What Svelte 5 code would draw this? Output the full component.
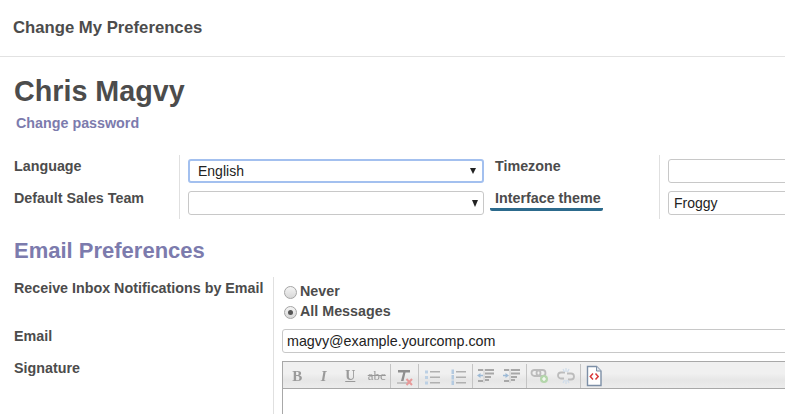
<script>
  const lines = [0, 1, 2];
</script>

<div class="page">
  <header class="bar"><h2>Change My Preferences</h2></header>
  <main class="sheet">
    <h1>Chris Magvy</h1>
    <a class="pw" href="#pw">Change password</a>

    <section class="prefs">
      <div class="label">Language</div>
      <div class="cell rule"><div class="field focus">English<span class="arrow small"></span></div></div>
      <div class="label">Timezone</div>
      <div class="cell rule last"><div class="field"></div></div>

      <div class="label">Default Sales Team</div>
      <div class="cell rule"><div class="field"><span class="arrow"></span></div></div>
      <div class="label"><span class="tip">Interface theme</span></div>
      <div class="cell rule last"><div class="field tight">Froggy</div></div>
    </section>

    <h3>Email Preferences</h3>

    <section class="mail">
      <div class="label">Receive Inbox Notifications by Email</div>
      <div class="cell radios">
        <div class="radio"><span class="dot"></span>Never</div>
        <div class="radio"><span class="dot on"></span>All Messages</div>
      </div>
      <div class="label l-email">Email</div>
      <div class="cell c-email"><div class="field tight wide">magvy@example.yourcomp.com</div></div>
      <div class="label l-sig">Signature</div>
      <div class="cell c-sig">
        <div class="editor">
          <div class="toolbar">
            <div class="group">
              <span class="glyph b">B</span>
              <span class="glyph i">I</span>
              <span class="glyph u">U</span>
              <span class="glyph s">abc</span>
            </div>
            <div class="group">
              <svg width="20" height="20" viewBox="0 0 20 20"><path d="M4 4h12v2.500h-4.500L9.500 15H7L9.200 6.500H4z" fill="#8f8f8f"/><path d="M3 17h11" stroke="#a0a0a0" stroke-width="1"/><path d="M12.500 13l5.500 6M18 13l-5.500 6" stroke="#e79a9a" stroke-width="2"/></svg>
            </div>
            <div class="group">
              <svg width="20" height="20" viewBox="0 0 20 20">
                {#each lines as n}
                  <rect x="3" y={4.500 + n * 5.500} width="3" height="3" fill="#bcd0e4"/>
                  <rect x="8" y={5 + n * 5.500} width="10" height="1.500" fill="#b0b0b0"/>
                {/each}
              </svg>
              <svg width="20" height="20" viewBox="0 0 20 20">
                {#each lines as n}
                  <rect x="3.500" y={3.500 + n * 5.500} width="2.500" height="4.500" fill="#b4cae0"/>
                  <rect x="8" y={5 + n * 5.500} width="10" height="1.500" fill="#b0b0b0"/>
                {/each}
              </svg>
            </div>
            <div class="group">
              <svg width="20" height="20" viewBox="0 0 20 20">
                <path d="M1 9.500l3.500-2.500v5z" fill="#9dbad6"/><path d="M4 9.500h3" stroke="#9dbad6" stroke-width="1.500"/>
                <path d="M8 3v14" stroke="#ccc" stroke-width="1"/>
                <path d="M2 4h5M9 4h9M9 7.500h9M9 11h6M9 14h4M2 15h5" stroke="#a8a8a8" stroke-width="1.800"/>
              </svg>
              <svg width="20" height="20" viewBox="0 0 20 20">
                <path d="M7 9.500L3.500 7v5z" fill="#9dbad6"/><path d="M1 9.500h3" stroke="#9dbad6" stroke-width="1.500"/>
                <path d="M8 3v14" stroke="#ccc" stroke-width="1"/>
                <path d="M2 4h5M9 4h9M9 7.500h9M9 11h6M9 14h4M2 15h5" stroke="#a8a8a8" stroke-width="1.800"/>
              </svg>
            </div>
            <div class="group">
              <svg width="20" height="20" viewBox="0 0 20 20">
                <rect x="1.500" y="4" width="9" height="6" rx="3" fill="none" stroke="#bcbcbc" stroke-width="1.800"/>
                <rect x="6.500" y="4" width="9" height="6" rx="3" fill="none" stroke="#bcbcbc" stroke-width="1.800"/>
                <circle cx="14" cy="13" r="4" fill="#b4d6ab"/>
                <path d="M12 13h4M14 11v4" stroke="#fff" stroke-width="1.200"/>
              </svg>
              <svg width="20" height="20" viewBox="0 0 20 20">
                <path d="M9 6.500H5a3 3 0 0 0 0 6h3M11 7.500h4a3 3 0 0 1 0 6h-3" fill="none" stroke="#bcbcbc" stroke-width="1.800"/>
                <path d="M10 2v4M10 14v4M7 3l1.500 3M13 3l-1.500 3M7 17l1.500-3M13 17l-1.500-3" stroke="#cfdcea" stroke-width="1.200"/>
              </svg>
            </div>
            <div class="group source">
              <svg width="20" height="22" viewBox="0 0 20 22">
                <path d="M3.500 1.500h9l4.500 4.500v14.500h-13.500z" fill="#fff" stroke="#7d8fa6" stroke-width="1.400"/>
                <path d="M12.500 1.500v4.500h4.500" fill="#dfe6ee" stroke="#7d8fa6" stroke-width="1"/>
                <path d="M9 8.500L6.300 11.500 9 14.500" fill="none" stroke="#d9393a" stroke-width="1.500"/>
                <path d="M11.500 8.500L14.200 11.500 11.500 14.500" fill="none" stroke="#d9393a" stroke-width="1.500"/>
              </svg>
            </div>
          </div>
          <div class="body"></div>
        </div>
      </div>
    </section>
  </main>
</div>

<style>
  :global(body) { margin: 0; background: #fff; }
  .page {
    width: 785px;
    height: 414px;
    overflow: hidden;
    font-family: "Liberation Sans", Arial, sans-serif;
    font-size: 14.3px;
    color: #4c4c4c;
  }
  .bar {
    height: 56px;
    border-bottom: 1px solid #e2e2e2;
    padding-left: 13px;
    display: flex;
    align-items: center;
  }
  .bar h2 { margin: 0; font-size: 16.7px; font-weight: bold; color: #4c4c4c; }
  .sheet { padding-left: 14px; width: 900px; }
  h1 { margin: 17px 0 0; font-size: 28.7px; line-height: 34px; font-weight: bold; color: #4c4c4c; }
  .pw {
    display: block;
    margin: 6px 0 0 2px;
    line-height: 18px;
    font-weight: bold;
    color: #7c7bad;
    text-decoration: none;
  }
  .prefs {
    display: grid;
    grid-template-columns: 165px 316px 164px 200px;
    grid-template-rows: 36px 28px;
    margin-top: 23px;
  }
  .label { font-weight: bold; line-height: 16px; padding-top: 3px; }
  .tip {
    display: inline-block;
    margin-left: -5px;
    padding: 0 2px 2px 5px;
    width: 106px;
    border-bottom: 3px solid #2c6a8c;
    border-radius: 2px;
    line-height: 16px;
  }
  .cell { min-width: 0; }
  .rule { border-left: 1px solid #e0e0e0; padding-left: 8px; }
  .prefs .rule:not(.last) { padding-right: 11px; }
  .prefs > .cell { display: flex; align-items: flex-start; padding-top: 4px; box-sizing: border-box; }
  .prefs > .cell:nth-child(n+5) { padding-top: 0; }
  .prefs > .label:nth-child(n+5) { padding-top: 0; margin-top: -1px; }
  .field {
    position: relative;
    flex: 1;
    box-sizing: border-box;
    height: 24px;
    border: 1px solid #c8c8c8;
    border-radius: 3px;
    padding-left: 9px;
    line-height: 22px;
    font-size: 14px;
    color: #222;
    background: #fff;
  }
  .tight { padding-left: 5px; }
  .wide { font-size: 14.3px; padding-left: 4px; }
  .focus {
    border: 2px solid #a3c0ef;
    line-height: 20px;
    padding-left: 8px;
  }
  .arrow {
    position: absolute;
    right: 5px;
    top: 8px;
    width: 0;
    height: 0;
    border-left: 3.500px solid transparent;
    border-right: 3.500px solid transparent;
    border-top: 7px solid #222;
  }
  .arrow.small {
    right: 6px;
    top: 7px;
    border-left-width: 3px;
    border-right-width: 3px;
    border-top-width: 6px;
  }
  h3 { margin: 20px 0 0; font-size: 22px; line-height: 24px; font-weight: bold; color: #7c7bad; }
  .mail {
    display: grid;
    grid-template-columns: 259px 520px;
    grid-template-rows: 52px 32px auto;
    margin-top: 14px;
  }
  .mail .cell { border-left: 1px solid #e0e0e0; padding-left: 8px; }
  .radios { padding-top: 4px; box-sizing: border-box; }
  .radio {
    display: flex;
    align-items: center;
    gap: 3px;
    height: 20px;
    margin-left: 2px;
    font-weight: bold;
    line-height: 18px;
  }
  .dot {
    box-sizing: border-box;
    width: 13px;
    height: 13px;
    margin-top: 2px;
    border-radius: 50%;
    border: 1px solid #a5a5a5;
    background: linear-gradient(#f4f4f4, #d8d8d8);
    display: grid;
    place-items: center;
  }
  .on::after { content: ""; width: 5px; height: 5px; border-radius: 50%; background: #555; }
  .c-email .field { display: block; }
  .l-sig, .l-email { padding-top: 0; margin-top: -1px; }
  .editor {
    border: 1px solid #a8a8a8;
    border-bottom: 0;
    border-right: 0;
  }
  .toolbar {
    display: flex;
    height: 27px;
    padding: 2px 0 0 1px;
    box-sizing: border-box;
    background: linear-gradient(#f0f0f0 0 45%, #e6e6e6 70%, #ececec);
    border-bottom: 1px solid #a8a8a8;
  }
  .group {
    display: flex;
    align-items: center;
    height: 24px;
    border-right: 1px solid #c4c4c4;
  }
  .group svg { display: block; margin: 0 3.250px; flex: none; filter: blur(0.5px); }
  .source { border-right: 0; }
  .source svg { filter: blur(0.3px); }
  .glyph {
    width: 26.500px;
    text-align: center;
    color: #9a9a9a;
    font-family: "Liberation Serif", serif;
    font-weight: bold;
    font-size: 15px;
    filter: blur(0.5px);
  }
  .glyph.i { font-style: italic; }
  .glyph.u { text-decoration: underline; font-size: 14px; }
  .glyph.s { text-decoration: line-through; font-weight: normal; font-size: 13px; }
  .body { height: 60px; background: #fff; }
</style>
